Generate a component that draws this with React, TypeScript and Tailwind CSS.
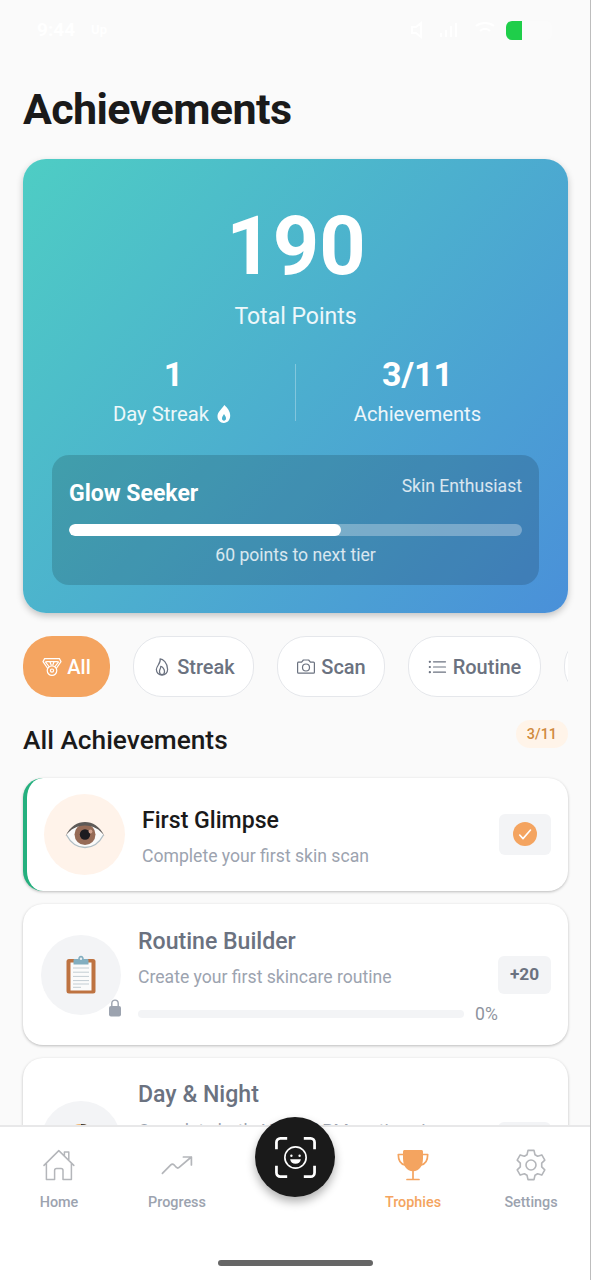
import React from 'react';
import { IoFlameOutline } from 'react-icons/io5';

const stroke = { fill: 'none', stroke: 'currentColor', strokeLinecap: 'round', strokeLinejoin: 'round' } as const;

const MedalIcon = () => (
  <svg className="h-[20px] w-[20px]" viewBox="0 0 20 20" {...stroke} strokeWidth="1.2">
    <path d="M2.6 1.6h14.8l1.6 3-4.4 6.4M2.6 1.6L1 4.6 5.400 11M4.600 4.600h10.800M3.400 4.900l3.600 4.600M16.600 4.900L13 9.500M8 5l1.200 3M12 5l-1.200 3" />
    <circle cx="10" cy="13.6" r="4.8" />
    <circle cx="10" cy="13.6" r="1.6" />
  </svg>
);

const FlameIcon = () => <IoFlameOutline className="h-[20px] w-[20px]" />;

const CameraIcon = () => (
  <svg className="h-[20px] w-[20px]" viewBox="0 0 20 20" {...stroke} strokeWidth="1.2">
    <path d="M2 5.200h3.600L7.400 3h5.200l1.800 2.200H17.500a.9.9 0 0 1 .9.9v9.200a.9.9 0 0 1-.9.9H2.500a.9.9 0 0 1-.9-.9V6.100a.9.9 0 0 1 .9-.9z" />
    <circle cx="10" cy="10.500" r="3.500" />
  </svg>
);

const ListIcon = () => (
  <svg className="h-[20px] w-[20px]" viewBox="0 0 20 20" {...stroke} strokeWidth="1.2">
    <path d="M5.5 4.8h12M5.5 10h12M5.5 15.2h12" />
    <path d="M1.8 4.8h.1M1.8 10h.1M1.8 15.2h.1" strokeWidth="2.2" />
  </svg>
);

const Drop = () => (
  <svg className="h-[20px] w-[16px]" viewBox="0 0 16 20">
    <path fill="currentColor" fillRule="evenodd" d="M8.400.9c3.100 3 5.800 6.300 5.800 10.700 0 4.600-2.700 7.300-6.400 7.300s-6.300-2.600-6.300-6.600c0-4 3.400-6.500 6.900-11.400zM8 10c-1 1.600-2 2.900-2 4.500 0 1.400.8 2.200 2 2.200s2-.8 2-2.200C10 12.900 9 11.600 8 10z" />
  </svg>
);

const Eye = () => (
  <svg className="h-[40px] w-[40px]" viewBox="0 0 40 40">
    <path d="M1.500 20C6 12 12.500 8.500 20 8.500S34 12 38.500 20C34 28.500 27.500 32 20 32S6 28.500 1.500 20z" fill="#fafafa" />
    <path d="M1.500 20C6 28.500 12.500 32.500 20 32.500s14-4 18.500-12.500" fill="none" stroke="#b0bec5" strokeWidth="1.300" />
    <circle cx="20" cy="19.500" r="10.500" fill="#966b57" />
    <circle cx="20" cy="19.500" r="5.200" fill="#1c1c20" />
    <circle cx="25.500" cy="16.500" r="1.900" fill="#cfa18e" />
    <path d="M.5 21C5.500 11 12.500 7 20 7s14.500 4 19.500 14C34.500 14 28 10.500 20 10.500S5.500 14 .5 21z" fill="#5e5a58" />
  </svg>
);

const Clipboard = () => (
  <svg className="h-[40px] w-[32px]" viewBox="0 0 32 40">
    <rect x="1.500" y="4" width="29" height="34.500" rx="2.500" fill="#be7341" />
    <path d="M5.500 7.500h21V35.500h-21z" fill="#fbfbfb" />
    <path d="M8 13h16M8 17.200h16M8 21.400h16M8 25.600h16M8 29h16" stroke="#c3cdd3" strokeWidth="1" />
    <path d="M8 32.300h8" stroke="#c3cdd3" strokeWidth="1" />
    <path d="M8.500 9.500V5.300c0-.8.6-1.300 1.400-1.300h3.300c.2-2 1.300-3.200 2.800-3.200s2.600 1.200 2.800 3.200h3.300c.8 0 1.400.5 1.400 1.300v4.200z" fill="#82aec0" />
    <circle cx="16" cy="3.800" r="1.200" fill="#e8eef1" />
  </svg>
);

const Lock = () => (
  <svg className="h-[18px] w-[14px]" viewBox="0 0 14 18">
    <path d="M3.800 8V4.300a3.200 3.200 0 0 1 6.400 0V8" fill="none" stroke="#9ca3af" strokeWidth="1.400" />
    <rect x="1" y="7" width="12" height="10.500" rx="2" fill="#9ca3af" />
  </svg>
);

const HomeIcon = () => (
  <svg className="h-[32px] w-[32px]" viewBox="0 0 32 32" {...stroke} strokeWidth="1.500">
    <path d="M1 16.400L15.800 1.600l15 14.800M3.400 14.200v16.200h8.200v-9c0-1.300.7-2 2-2h4.400c1.300 0 2 .7 2 2v9h8.400V14.200M21.400 6.800V3h4.400v8.400" />
  </svg>
);

const TrendIcon = () => (
  <svg className="h-[32px] w-[32px]" viewBox="0 0 32 32" {...stroke} strokeWidth="1.700">
    <path d="M1.400 24.400l8.400-8.600c1-1 2.200-1 3.200 0l2.200 2.400c1 1 2.200 1 3.200 0L30.300 8M22.400 8h8v8" />
  </svg>
);

const TrophyIcon = () => (
  <svg className="h-[32px] w-[32px]" viewBox="0 0 32 32">
    <path d="M7.700 1h16.600c1.100 0 1.700.6 1.700 1.700v6.800c0 7-3.600 12.800-10 12.800S6 16.500 6 9.500V2.700C6 1.600 6.600 1 7.700 1z" fill="currentColor" />
    <path d="M6.400 5.500H1.300c0 6.300 2.800 9.700 6.700 10.500M25.600 5.500h5.100c0 6.300-2.800 9.700-6.700 10.500M16 21v9M10 30.500h12" {...stroke} strokeWidth="1.700" />
  </svg>
);

const GearIcon = () => (
  <svg className="h-[32px] w-[32px]" viewBox="0 0 32 32" {...stroke} strokeWidth="1.600">
    <path d="M13 1.400h6l1 4.300 2.600 1.500 4.200-1.300 3 5.200-3.100 3v3.800l3.100 3-3 5.200-4.200-1.300L20 26.300l-1 4.300h-6l-1-4.300-2.600-1.500-4.200 1.300-3-5.200 3.100-3v-3.800l-3.100-3 3-5.200 4.200 1.300L12 5.700z" />
    <circle cx="16" cy="16" r="5" />
  </svg>
);

const FaceScan = () => (
  <svg className="h-[43px] w-[43px]" viewBox="0 0 44 44" fill="none" stroke="#fff">
    <path d="M2.500 13.500V6.500a4 4 0 0 1 4-4h7M30.500 2.500h7a4 4 0 0 1 4 4v7M41.500 30.500v7a4 4 0 0 1-4 4h-7M13.500 41.500h-7a4 4 0 0 1-4-4v-7" strokeWidth="2.800" />
    <circle cx="22" cy="22" r="10.900" strokeWidth="1.700" />
    <circle cx="17.800" cy="20.200" r="1.200" fill="#fff" stroke="none" />
    <circle cx="26.200" cy="20.200" r="1.200" fill="#fff" stroke="none" />
    <path d="M16.500 23.800h11c-.4 3.200-2.700 4.600-5.500 4.600s-5.100-1.400-5.500-4.600z" fill="#fff" stroke="none" />
  </svg>
);

const chips = [
  { label: 'Streak', icon: <FlameIcon />, width: 'w-[121px]' },
  { label: 'Scan', icon: <CameraIcon />, width: 'w-[108px]' },
  { label: 'Routine', icon: <ListIcon />, width: 'w-[133px]' },
];

const StatusBar = () => (
  <div className="flex h-[60px] items-center justify-between pr-[38px] pl-[37px] text-[19px] font-bold text-white">
    <div className="flex items-center gap-4">
      <span>9:44</span>
      <span className="text-[13px]">Up</span>
    </div>
    <div className="flex items-center gap-[8px]">
      <svg className="h-[20px] w-[88px]" viewBox="0 0 88 20" fill="none" stroke="#fff" strokeWidth="2">
        <path d="M2 7v6h4l5 4V3L6 7zM31 17v-4M36 17v-7M41 17V6M46 17V3" />
        <path d="M66 6c5-4 13-4 18 0M70 11c3-3 7-3 10 0" />
      </svg>
      <div className="flex h-[19px] w-[46px] overflow-hidden rounded-[6px] bg-white/30">
        <div className="h-full w-[16px] bg-[#1fce4a]" />
      </div>
    </div>
  </div>
);

const SummaryCard = () => (
  <section className="mr-[22px] ml-[23px] h-[454px] rounded-[23px] bg-linear-[130deg,#4ecdc4_0%,#4a90d9_100%] px-[29px] text-white shadow-[0_3px_7px_rgba(0,0,0,0.22)]">
    <div className="pt-[41px] pl-px text-center text-[81px] leading-[94px] font-bold">190</div>
    <div className="mt-[9px] text-center text-[23px] leading-[28px] text-white/90">Total Points</div>
    <div className="mt-[23px] flex h-[75px]">
      <div className="flex-1 text-center">
        <div className="text-[34px] leading-[40px] font-bold">1</div>
        <div className="mt-[8px] flex items-center justify-center gap-[7px] pr-[2px] text-[20.300px] leading-[24px] text-white/90">
          Day Streak <span className="text-white"><Drop /></span>
        </div>
      </div>
      <div className="mt-[10px] h-[57px] w-px bg-white/30" />
      <div className="flex-1 text-center">
        <div className="text-[34px] leading-[40px] font-bold">3/11</div>
        <div className="mt-[8px] text-[20.200px] leading-[24px] text-white/90">Achievements</div>
      </div>
    </div>
    <div className="mt-[26px] h-[130px] rounded-[17px] bg-black/15 px-[17px] pt-[17px]">
      <div className="flex h-[35px] items-start justify-between">
        <span className="pt-[8px] text-[23px] leading-[28px] font-bold">Glow Seeker</span>
        <span className="pt-[4px] text-[17.600px] leading-[20px] text-white/80">Skin Enthusiast</span>
      </div>
      <div className="mt-[17px] h-[12px] overflow-hidden rounded-full bg-white/30">
        <div className="h-full w-[60%] rounded-full bg-white" />
      </div>
      <div className="mt-[9px] text-center text-[17.600px] leading-[20px] text-white/80">60 points to next tier</div>
    </div>
  </section>
);

const Progress = () => (
  <div className="mt-[15px] flex h-[20px] items-center gap-[11px]">
    <div className="h-[8px] flex-1 rounded-full bg-[#f3f4f6]" />
    <span className="w-[23px] text-[17.600px] leading-[20px] text-[#8e949e]">0%</span>
  </div>
);

const NavItem = ({ label, icon, active = false }: { label: string; icon: React.ReactNode; active?: boolean }) => (
  <div className={`flex w-[118px] flex-col items-center pt-[22px] ${active ? 'text-[#f4a460]' : 'text-[#b4b6ba]'}`}>
    {icon}
    <span className={`mt-[13px] text-[14.400px] leading-[18px] font-medium ${active ? '' : 'text-[#9ca3af]'}`}>{label}</span>
  </div>
);

export default function App() {
  return (
    <div className="relative flex h-[1280px] w-[591px] flex-col overflow-hidden border-r border-[#bdbdbd] bg-[#fafafa] font-['Roboto',sans-serif]">
      <StatusBar />
      <h1 className="mt-[22px] mb-[22px] pl-[23px] text-[43px] leading-[55px] font-bold tracking-[-0.600px] text-[#1a1a1a]">Achievements</h1>
      <SummaryCard />

      <div className="mt-[23px] mr-[22px] ml-[23px] flex h-[61px] shrink-0 gap-[23px] overflow-hidden text-[20px] font-medium text-[#6b7280]">
        <div className="flex w-[87px] shrink-0 items-center justify-center gap-[5px] rounded-[29px] bg-[#f4a460] text-white">
          <MedalIcon />
          <span>All</span>
        </div>
        {chips.map((chip) => (
          <div key={chip.label} className={`flex shrink-0 items-center justify-center gap-[5px] rounded-[29px] border border-[#e5e7eb] bg-white ${chip.width}`}>
            {chip.icon}
            <span>{chip.label}</span>
          </div>
        ))}
        <div className="w-[120px] shrink-0 rounded-[29px] border border-[#e5e7eb] bg-white" />
      </div>

      <div className="mt-[23px] mr-[22px] ml-[23px] flex h-[58px] shrink-0 items-start justify-between">
        <h2 className="pt-[4px] text-[26.300px] leading-[32px] font-medium text-[#1a1a1a]">All Achievements</h2>
        <span className="rounded-[14px] bg-[#fff4e9] px-[11px] pt-px text-[14.400px] leading-[27px] font-medium text-[#d08a3c]">3/11</span>
      </div>

      <div className="mr-[22px] ml-[23px] flex flex-col gap-[13px]">
        <article className="flex h-[113px] shrink-0 items-center rounded-[20px] border-l-[4px] border-[#24b07e] bg-white pr-[17px] pl-[17px] shadow-[0_1px_3px_rgba(0,0,0,0.25)]">
          <div className="flex h-[81px] w-[81px] items-center justify-center rounded-full bg-[#fff3ea]">
            <Eye />
          </div>
          <div className="ml-[17px] flex-1 pt-[3px]">
            <h3 className="text-[23.100px] leading-[28px] font-medium text-[#1a1a1a]">First Glimpse</h3>
            <p className="mt-[11px] text-[17.600px] leading-[20px] text-[#9ca3af]">Complete your first skin scan</p>
          </div>
          <div className="flex h-[41px] w-[52px] items-center justify-center rounded-[6px] bg-[#f3f4f6] pb-[2px]">
            <svg className="h-[24px] w-[24px]" viewBox="0 0 24 24">
              <circle cx="12" cy="12" r="12" fill="#f4a460" />
              <path d="M6.700 13l3.300 3.600L17.500 8" fill="none" stroke="#fff" strokeWidth="1.600" strokeLinecap="round" strokeLinejoin="round" />
            </svg>
          </div>
        </article>

        <article className="flex h-[141px] shrink-0 items-center rounded-[20px] bg-white pr-[17px] pl-[18px] shadow-[0_1px_3px_rgba(0,0,0,0.25)]">
          <div className="relative flex h-[80px] w-[80px] items-center justify-center rounded-full bg-[#f3f4f6]">
            <Clipboard />
            <span className="absolute right-[-1px] bottom-[-2px]"><Lock /></span>
          </div>
          <div className="ml-[17px] w-[360px] pt-[2px]">
            <h3 className="text-[23.100px] leading-[28px] font-medium text-[#6b7280]">Routine Builder</h3>
            <p className="mt-[9px] text-[17.600px] leading-[24px] text-[#9ca3af]">Create your first skincare routine</p>
            <Progress />
          </div>
          <div className="flex h-[38px] w-[53px] items-center justify-center rounded-[6px] bg-[#f3f4f6] text-[17.250px] font-bold text-[#6b7280]">+20</div>
        </article>

        <article className="flex h-[166px] shrink-0 items-center rounded-[20px] bg-white pr-[17px] pl-[18px] shadow-[0_1px_3px_rgba(0,0,0,0.25)]">
          <div className="flex h-[80px] w-[80px] items-start justify-center rounded-full bg-[#f3f4f6] pt-[22px]">
            <svg className="h-[36px] w-[36px]" viewBox="0 0 36 36">
              <circle cx="18" cy="18" r="17" fill="#f2b264" />
              <path d="M18 1a17 17 0 0 1 0 34z" fill="#30343c" />
            </svg>
          </div>
          <div className="ml-[17px] w-[360px]">
            <h3 className="text-[23.100px] leading-[28px] font-medium text-[#6b7280]">Day &amp; Night</h3>
            <p className="mt-[10px] w-[350px] text-[17.600px] leading-[24px] text-[#9ca3af]">Complete both AM and PM routines in one day</p>
            <Progress />
          </div>
          <div className="h-[38px] w-[53px] rounded-[6px] bg-[#f3f4f6]" />
        </article>
      </div>

      <nav className="absolute inset-x-0 bottom-0 h-[155px] border-t-2 border-[#e8e8e9] bg-white">
        <div className="flex">
          <NavItem label="Home" icon={<HomeIcon />} />
          <NavItem label="Progress" icon={<TrendIcon />} />
          <div className="flex w-[118px] justify-center">
            <div className="mt-[-10px] flex h-[80px] w-[80px] items-center justify-center rounded-full bg-[#1a1a1a] shadow-[0_5px_10px_rgba(0,0,0,0.3)]">
              <FaceScan />
            </div>
          </div>
          <NavItem label="Trophies" icon={<TrophyIcon />} active />
          <NavItem label="Settings" icon={<GearIcon />} />
        </div>
        <div className="absolute bottom-[14px] left-[218px] h-[6px] w-[155px] rounded-full bg-[#666]" />
      </nav>
    </div>
  );
}
